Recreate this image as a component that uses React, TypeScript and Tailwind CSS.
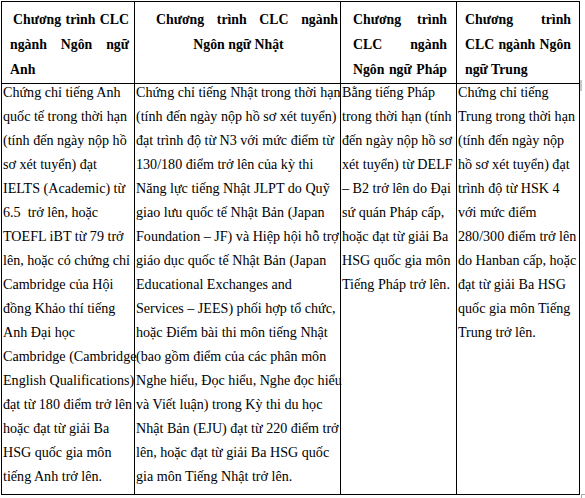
import React from 'react';

type HeadLine = { words: string[]; justify?: boolean; center?: boolean; pl: string };

interface Column {
  width: string;
  headPad: string;
  head: HeadLine[];
  body: string[];
}

const columns: Column[] = [
  {
    width: 'w-[133px]',
    headPad: 'pr-[5px]',
    head: [
      { words: ['Chương', 'trình', 'CLC'], justify: true, pl: 'pl-[11px]' },
      { words: ['ngành', 'Ngôn', 'ngữ'], justify: true, pl: 'pl-[8px]' },
      { words: ['Anh'], pl: 'pl-[8px]' },
    ],
    body: [
      'Chứng chỉ tiếng Anh',
      'quốc tế trong thời hạn',
      '(tính đến ngày nộp hồ',
      'sơ xét tuyển) đạt',
      'IELTS (Academic) từ',
      '6.5  trở lên, hoặc',
      'TOEFL iBT từ 79 trở',
      'lên, hoặc có chứng chỉ',
      'Cambridge của Hội',
      'đồng Khảo thí tiếng',
      'Anh Đại học',
      'Cambridge (Cambridge',
      'English Qualifications)',
      'đạt từ 180 điểm trở lên',
      'hoặc đạt từ giải Ba',
      'HSG quốc gia môn',
      'tiếng Anh trở lên.',
    ],
  },
  {
    width: 'w-[206px]',
    headPad: 'pr-[2px]',
    head: [
      { words: ['Chương', 'trình', 'CLC', 'ngành'], justify: true, pl: 'pl-[21px]' },
      { words: ['Ngôn ngữ Nhật'], center: true, pl: 'pl-[10px] pr-[6px]' },
    ],
    body: [
      'Chứng chỉ tiếng Nhật trong thời hạn',
      '(tính đến ngày nộp hồ sơ xét tuyển)',
      'đạt trình độ từ N3 với mức điểm từ',
      '130/180 điểm trở lên của kỳ thi',
      'Năng lực tiếng Nhật JLPT do Quỹ',
      'giao lưu quốc tế Nhật Bản (Japan',
      'Foundation – JF) và Hiệp hội hỗ trợ',
      'giáo dục quốc tế Nhật Bản (Japan',
      'Educational Exchanges and',
      'Services – JEES) phối hợp tổ chức,',
      'hoặc Điểm bài thi môn tiếng Nhật',
      '(bao gồm điểm của các phân môn',
      'Nghe hiểu, Đọc hiểu, Nghe đọc hiểu',
      'và Viết luận) trong Kỳ thi du học',
      'Nhật Bản (EJU) đạt từ 220 điểm trở',
      'lên, hoặc đạt từ giải Ba HSG quốc',
      'gia môn Tiếng Nhật trở lên.',
    ],
  },
  {
    width: 'w-[116px]',
    headPad: 'pr-[9px]',
    head: [
      { words: ['Chương', 'trình'], justify: true, pl: 'pl-[12px]' },
      { words: ['CLC', 'ngành'], justify: true, pl: 'pl-[12px]' },
      { words: ['Ngôn', 'ngữ', 'Pháp'], justify: true, pl: 'pl-[12px]' },
    ],
    body: [
      'Bằng tiếng Pháp',
      'trong thời hạn (tính',
      'đến ngày nộp hồ sơ',
      'xét tuyển) từ DELF',
      '– B2 trở lên do Đại',
      'sứ quán Pháp cấp,',
      'hoặc đạt từ giải Ba',
      'HSG quốc gia môn',
      'Tiếng Pháp trở lên.',
    ],
  },
  {
    width: 'w-[123px]',
    headPad: 'pr-[8px]',
    head: [
      { words: ['Chương', 'trình'], justify: true, pl: 'pl-[8px]' },
      { words: ['CLC', 'ngành', 'Ngôn'], justify: true, pl: 'pl-[8px]' },
      { words: ['ngữ Trung'], pl: 'pl-[8px]' },
    ],
    body: [
      'Chứng chỉ tiếng',
      'Trung trong thời hạn',
      '(tính đến ngày nộp',
      'hồ sơ xét tuyển) đạt',
      'trình độ từ HSK 4',
      'với mức điểm',
      '280/300 điểm trở lên',
      'do Hanban cấp, hoặc',
      'đạt từ giải Ba HSG',
      'quốc gia môn Tiếng',
      'Trung trở lên.',
    ],
  },
];

export default function App() {
  return (
    <div className="relative w-[585px] h-[498px] bg-white text-black font-['Liberation_Serif',serif]">
      <div className="ml-[1px] mt-[1px] inline-flex flex-col border-l border-t border-black">
        <div className="flex h-[82px]">
          {columns.map((col, i) => (
            <div key={i} className={`${col.width} ${col.headPad} border-r border-b border-black pt-[5px] text-[13.8px] leading-[25px] font-bold`}>
              {col.head.map((line, j) => (
                <div
                  key={j}
                  className={`${line.pl} whitespace-pre ${
                    line.justify ? 'flex justify-between' : line.center ? 'text-center' : ''
                  }`}
                >
                  {line.justify ? line.words.map((w, k) => <span key={k}>{w}</span>) : line.words.join(' ')}
                </div>
              ))}
            </div>
          ))}
        </div>
        <div className="flex h-[411px]">
          {columns.map((col, i) => (
            <div key={i} className={`${col.width} border-r border-b border-black pl-[1px] text-[14.1px] leading-[24px]`}>
              <div className="-mt-[4px]">
                {col.body.map((line, j) => (
                  <div key={j} className="whitespace-pre">
                    {line}
                  </div>
                ))}
              </div>
            </div>
          ))}
        </div>
      </div>
      {/* faint selection marks from the source capture */}
      <div className="absolute left-[580px] top-[80px] w-[2px] h-[11px] bg-[#c8c8c8]" />
      <div className="absolute left-[581px] top-[494px] w-[4px] h-[4px] border-l border-t border-[#a8a8a8]" />
    </div>
  );
}
